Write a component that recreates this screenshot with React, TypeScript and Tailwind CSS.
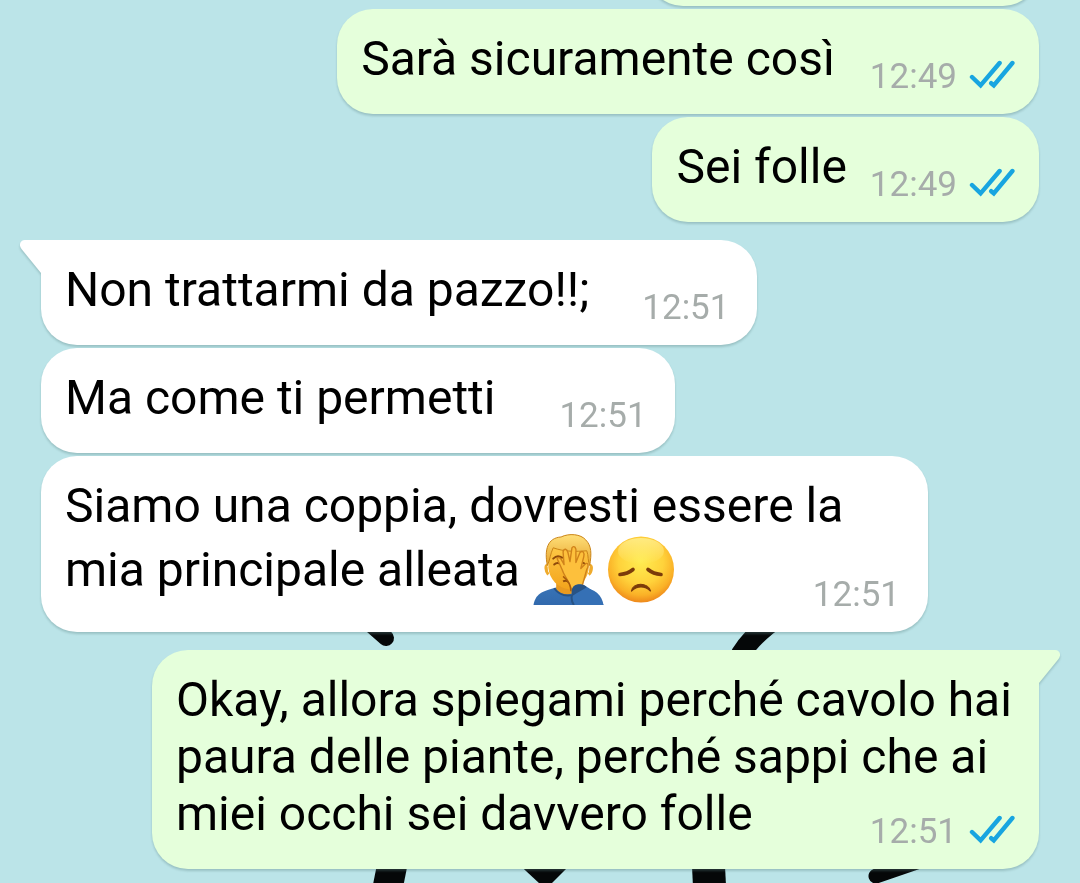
import React from 'react';

interface Message {
  id: number;
  text: string;
  time: string;
  outgoing: boolean;
  tail?: boolean;
  groupStart?: boolean;
  timeOffset: string;
  emojis?: boolean;
}

const messages: Message[] = [
  { id: 1, text: 'Sarà sicuramente così', time: '12:49', outgoing: true, timeOffset: 'ml-[35px] mt-[33px]' },
  { id: 2, text: 'Sei folle', time: '12:49', outgoing: true, timeOffset: 'ml-[23px] mt-[33px]' },
  { id: 3, text: 'Non trattarmi da pazzo!!;', time: '12:51', outgoing: false, tail: true, groupStart: true, timeOffset: 'ml-[53px] mt-[33px]' },
  { id: 4, text: 'Ma come ti permetti', time: '12:51', outgoing: false, timeOffset: 'ml-16 mt-[33px]' },
  { id: 5, text: 'Siamo una coppia, dovresti essere la mia principale alleata', time: '12:51', outgoing: false, timeOffset: 'ml-[23px] mt-[47px]', emojis: true },
  { id: 6, text: 'Okay, allora spiegami perché cavolo hai paura delle piante, perché sappi che ai miei occhi sei davvero folle', time: '12:51', outgoing: true, tail: true, groupStart: true, timeOffset: 'ml-[23px] mt-[33px]' },
];

const DoubleCheck: React.FC = () => (
  <svg viewBox="0 0 46 30" className="w-[46px] h-[30px] mb-1" fill="none" stroke="#18a5e0" strokeWidth="4.4" strokeLinecap="round" strokeLinejoin="miter" role="img" aria-label="Letto">
    <path d="M3 17 L11.6 25.4 L30.6 3" />
    <path d="M22.2 23.2 L24.8 25.4 L43.4 3" />
  </svg>
);

const Facepalm: React.FC = () => (
  <svg viewBox="0 0 72 72" className="inline-block align-[-19px] w-[72px] h-[71px]" role="img" aria-label="uomo che si copre il viso">
    <defs>
      <linearGradient id="skin" x1="0" y1="0" x2="0" y2="1">
        <stop offset="0" stopColor="#ffcf4f" />
        <stop offset="1" stopColor="#f3a41c" />
      </linearGradient>
      <linearGradient id="hair" x1="0" y1="0" x2="0" y2="1">
        <stop offset="0" stopColor="#ffe07a" />
        <stop offset="1" stopColor="#e7a42c" />
      </linearGradient>
      <linearGradient id="shirt" x1="0" y1="0" x2="0" y2="1">
        <stop offset="0" stopColor="#3873b6" />
        <stop offset="1" stopColor="#3169ad" />
      </linearGradient>
    </defs>
    <path d="M1 72 C3 61 9 58 25 54 L49 54 C64 56 70 61 72 72 Z" fill="url(#shirt)" />
    <path d="M24 47 L24 56 C30 63 40 63 47 56 L48 47 Z" fill="#e99a20" />
    <path d="M15 32 C13 31 13 38 16 41 M58 32 C61 31 60 39 57 41" fill="#efab2d" stroke="#efab2d" strokeWidth="3" />
    <path d="M16 18 C16 7 25 4 36 4 C48 4 57 8 57 19 L57 35 C56 46 47 56 37 56 C26 55 17 46 16 34 Z" fill="url(#skin)" />
    <path d="M15 32 C12 16 15 4 29 3 C37 -1 49 0 54 6 C60 12 60 20 58 32 C56 28 57 22 55 17 C44 18 32 18 21 14 C18 20 18 26 15 32 Z" fill="url(#hair)" stroke="#c98317" strokeWidth="1" />
    <path d="M21 25 C24 22 27 22 30 24 M22 31 C24 29 27 29 29 31 M47 30 C49 28 52 29 54 31" fill="none" stroke="#8f4a0a" strokeWidth="2" strokeLinecap="round" />
    <path d="M31 48 C33 47 35 47 37 49" stroke="#8f4a0a" strokeWidth="2" fill="none" />
    <path d="M25 25 C27 22 29 25 32 31 L31 18 C32 14 35 15 36 19 L38 28 L40 14 C42 11 45 14 44 19 L44 29 L48 19 C51 16 53 19 52 23 L49 35 L54 30 C57 29 57 33 55 36 L50 54 L39 56 C38 48 32 43 30 36 Z" fill="#fdc03c" stroke="#d0821a" strokeWidth="1.4" strokeLinejoin="round" />
    <path d="M31 43 C36 47 39 52 39 58" stroke="#a85b0c" strokeWidth="1.5" fill="none" />
    <path d="M41 55 C43 51 49 50 54 53 C61 57 69 63 72 72 L42 72 C39 65 39 59 41 55 Z" fill="#3570b5" />
    <path d="M40 60 C39 55 42 51 47 51 C51 51 54 52 55 54 C51 57 46 59 40 63 Z" fill="#285385" />
    <path d="M22 55 C27 62 34 63 40 62 M40 62 C39 66 40 69 42 72" stroke="#285385" strokeWidth="2" fill="none" />
  </svg>
);

const Disappointed: React.FC = () => (
  <svg viewBox="0 0 70 71" className="inline-block align-[-19px] w-[70px] h-[71px]" role="img" aria-label="faccina delusa">
    <defs>
      <radialGradient id="face" cx=".5" cy=".38" r=".62">
        <stop offset="0" stopColor="#ffec50" />
        <stop offset=".55" stopColor="#ffd23b" />
        <stop offset=".82" stopColor="#fab127" />
        <stop offset="1" stopColor="#ee881b" />
      </radialGradient>
      <linearGradient id="shine" x1="0" y1="0" x2="0" y2="1">
        <stop offset="0" stopColor="#fff6a0" stopOpacity=".7" />
        <stop offset="1" stopColor="#fff6a0" stopOpacity="0" />
      </linearGradient>
    </defs>
    <circle cx="37" cy="35.5" r="33" fill="url(#face)" />
    <ellipse cx="37" cy="17" rx="23" ry="13" fill="url(#shine)" />
    <path d="M16 40.5 C22 40 26 38 29 35.5" stroke="#7b3b0a" strokeWidth="3.6" strokeLinecap="round" fill="none" />
    <path d="M44 35.5 C47 38 51 40 57 40.5" stroke="#7b3b0a" strokeWidth="3.6" strokeLinecap="round" fill="none" />
    <path d="M27.5 57 C29 48 44 48 46.5 57 C41 51.5 33 51.5 27.5 57 Z" fill="#7b3b0a" stroke="#7b3b0a" strokeWidth="1.2" strokeLinejoin="round" />
  </svg>
);

const Tail: React.FC<{ outgoing: boolean }> = ({ outgoing }) => (
  <svg
    viewBox="0 0 22 34"
    className={`absolute top-0 w-[22px] h-[34px] ${outgoing ? '-right-[21px] -scale-x-100 text-[#e5ffdb]' : '-left-[21px] text-white'}`}
    aria-hidden="true"
  >
    <path d="M22 0 H5 C0 0 -1.5 5 1.5 9 L21 33 H22 Z" fill="currentColor" />
  </svg>
);

const Wallpaper: React.FC = () => (
  <svg viewBox="0 0 1080 883" preserveAspectRatio="xMidYMin slice" className="absolute inset-0 w-full h-full" aria-hidden="true">
    <g fill="none" stroke="#050708" strokeLinecap="round">
      <path d="M362 617 L386 638" strokeWidth="16" />
      <path d="M780 616 C764 627 750 639 741 654" strokeWidth="20" />
      <path d="M394 856 L386 896" strokeWidth="30" strokeLinecap="butt" />
      <path d="M708 856 L710 896" strokeWidth="33" strokeLinecap="butt" />
      <path d="M876 876 L920 861" strokeWidth="15" />
    </g>
    <path d="M512 858 L577 858 L551 884 L540 884 Z" fill="#050708" />
  </svg>
);

const Bubble: React.FC<{ message: Message }> = ({ message }) => {
  const { text, time, outgoing, tail, groupStart, timeOffset, emojis } = message;
  const corner = tail ? (outgoing ? 'rounded-tr-none' : 'rounded-tl-none') : '';

  return (
    <li
      className={`relative max-w-[887px] px-6 pt-[21px] pb-[27px] rounded-[36px] drop-shadow-[0_2px_1px_rgba(90,130,130,0.35)] ${corner} ${
        outgoing ? 'self-end bg-[#e5ffdb]' : 'self-start bg-white'
      } ${groupStart ? 'mt-[18px]' : 'mt-[3px]'}`}
    >
      {tail && <Tail outgoing={outgoing} />}
      <p className="text-[48px] leading-[57px] text-black">
        {text}
        {emojis && (
          <span className="whitespace-nowrap">
            {' '}
            <Facepalm />
            <Disappointed />
          </span>
        )}
        <span
          className={`float-right flex items-center gap-3 h-7 -mb-2 text-[35px] leading-7 text-[#a6acaa] ${timeOffset} ${
            outgoing ? '' : 'mr-1'
          }`}
        >
          <time>{time}</time>
          {outgoing && <DoubleCheck />}
        </span>
      </p>
    </li>
  );
};

const App: React.FC = () => {
  return (
    <main className="relative min-h-screen overflow-hidden bg-[#bbe4e8] font-['Roboto',sans-serif]">
      <Wallpaper />
      <ul className="relative flex flex-col px-[41px] pb-[14px]">
        {/* end of the previous message, scrolled out at the top */}
        <li className="self-end w-[392px] h-[105px] -mt-[99px] rounded-[36px] bg-[#e5ffdb] drop-shadow-[0_2px_1px_rgba(90,130,130,0.35)]" />
        {messages.map((message) => (
          <Bubble key={message.id} message={message} />
        ))}
      </ul>
    </main>
  );
};

export default App;
